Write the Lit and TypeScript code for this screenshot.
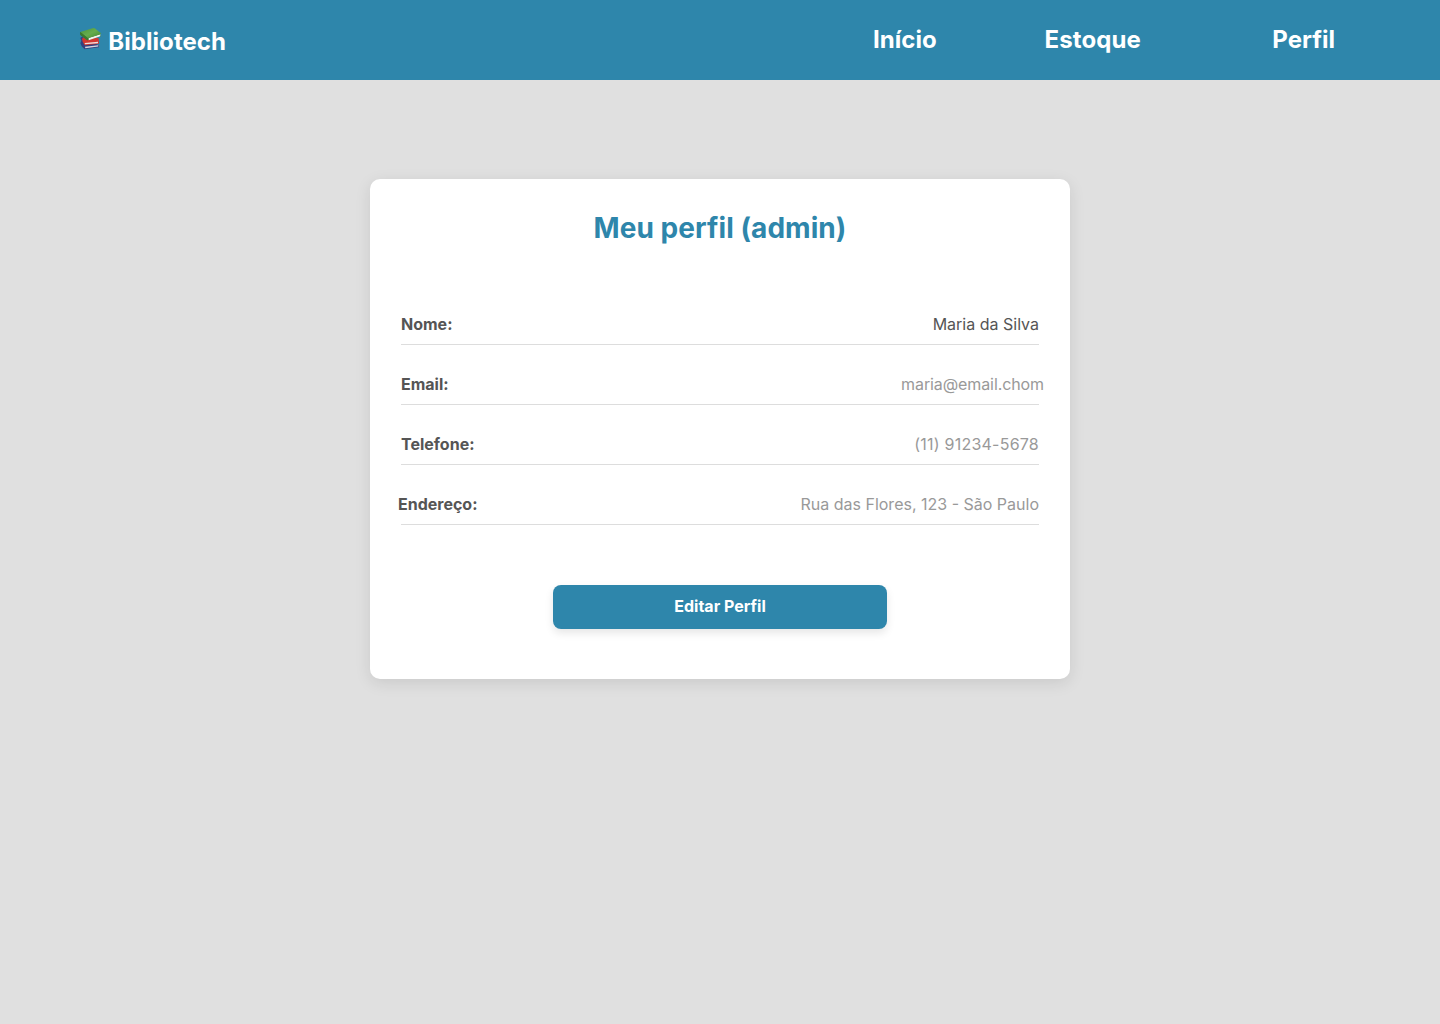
import { LitElement, html, css, svg } from "lit";
import { customElement } from "lit/decorators.js";

interface Field {
  label: string;
  value: string;
  kind: string;
}

const fields: Field[] = [
  { label: "Nome:", value: "Maria da Silva", kind: "name" },
  { label: "Email:", value: "maria@email.chom", kind: "email" },
  { label: "Telefone:", value: "(11) 91234-5678", kind: "phone" },
  { label: "Endereço:", value: "Rua das Flores, 123 - São Paulo", kind: "address" },
];

// Stack of three books: blue, red and green from bottom to top.
const books = svg`
  <defs>
    <linearGradient id="cover" x1="0" y1="0" x2="1" y2="1">
      <stop offset="0" stop-color="#4b9639"/>
      <stop offset="0.5" stop-color="#66ad4d"/>
      <stop offset="1" stop-color="#3f8a30"/>
    </linearGradient>
  </defs>
  <path fill="#34407f" d="M36 50 L31 54 L34 62 L31 70 L35 79 L44 88 L87 82 L87 75 L60 66Z"/>
  <path fill="#d6d5de" d="M45 80 L85 75.5 L85 79.5 L46 85Z"/>
  <path fill="#d23630" d="M40 52 L36 57 L38 65 L44 76 L87 71 L86 55 L58 50Z"/>
  <path fill="#eedfdd" d="M44 69 L84 65.5 L84 69.5 L45 73Z"/>
  <path fill="#39702f" d="M31 37 L30 41 L33 46 L54 61 L93 49 L90 43Z"/>
  <path fill="#f2f3ee" d="M56 54 L91 42.5 L91 49 L56 60.5Z"/>
  <path fill="url(#cover)" d="M31 36 L70 24 Q72 24 74 25 L93 40 L91 43 L53 55Z"/>
  <path fill="#3a7a30" d="M31 36 L53 54 L52 60 L55 62 L50 60 L31 45 L30 40Z"/>
`;

@customElement("app-root")
export class AppRoot extends LitElement {
  static styles = css`
    :host {
      display: block;
      min-height: 1024px;
      box-sizing: border-box;
      background: #e0e0e0;
      font-family: Inter, "Liberation Sans", sans-serif;
    }
    .header {
      display: flex;
      justify-content: space-between;
      height: 80px;
      box-sizing: border-box;
      padding: 25px 105px 0 79px;
      background: #2e86ab;
      color: #fff;
      font-size: 24px;
      font-weight: 700;
      line-height: 29px;
    }
    .brand {
      display: flex;
      align-items: flex-start;
      gap: 6.3px;
      padding-top: 2px;
      letter-spacing: 0.06px;
    }
    .books {
      display: block;
      width: 23px;
      height: 24px;
    }
    .nav {
      display: flex;
    }
    .nav span {
      white-space: nowrap;
    }
    .stock {
      margin-left: 108px;
      letter-spacing: 0.08px;
    }
    .profile {
      margin-left: 131.5px;
    }
    .card {
      display: flex;
      flex-direction: column;
      width: 700px;
      height: 500px;
      box-sizing: border-box;
      margin: 99px auto 0;
      padding: 32px 31px 0;
      border-radius: 10px;
      background: #fff;
      box-shadow: 0 4px 16px rgba(0, 0, 0, 0.1);
    }
    h1 {
      margin: 0 0 60px;
      color: #2e86ab;
      font-size: 28px;
      font-weight: 700;
      letter-spacing: 0.06px;
      line-height: 34px;
      text-align: center;
    }
    .row {
      display: flex;
      justify-content: space-between;
      height: 60px;
      box-sizing: border-box;
      padding-top: 30px;
      border-bottom: 1px solid #ddd;
      font-size: 16px;
      line-height: 19px;
      white-space: nowrap;
    }
    .row.name {
      height: 40px;
      padding-top: 10px;
    }
    .label {
      color: #555;
      font-weight: 700;
    }
    .value {
      color: #999;
      font-weight: 400;
    }
    .name .value {
      color: #555;
    }
    .email .value {
      margin-right: -5px;
      letter-spacing: -0.1px;
    }
    .phone .value {
      letter-spacing: 0.23px;
    }
    .address .label {
      margin-left: -3px;
    }
    button {
      align-self: center;
      width: 334px;
      height: 44px;
      margin-top: 60px;
      padding: 0 0 2px;
      border: 0;
      border-radius: 8px;
      background: #2e86ab;
      box-shadow: 0 4px 8px rgba(0, 0, 0, 0.1);
      color: #fff;
      font: 700 16px/19px Inter, "Liberation Sans", sans-serif;
    }
  `;

  render() {
    return html`
      <header class="header">
        <div class="brand">
          <svg class="books" viewBox="27 21 69 72" aria-hidden="true">${books}</svg>
          <span>Bibliotech</span>
        </div>
        <nav class="nav">
          <span>Início</span>
          <span class="stock">Estoque</span>
          <span class="profile">Perfil</span>
        </nav>
      </header>
      <main class="card">
        <h1>Meu perfil (admin)</h1>
        ${fields.map(
          (f) => html`<div class="row ${f.kind}">
            <span class="label">${f.label}</span>
            <span class="value">${f.value}</span>
          </div>`
        )}
        <button>Editar Perfil</button>
      </main>
    `;
  }
}
